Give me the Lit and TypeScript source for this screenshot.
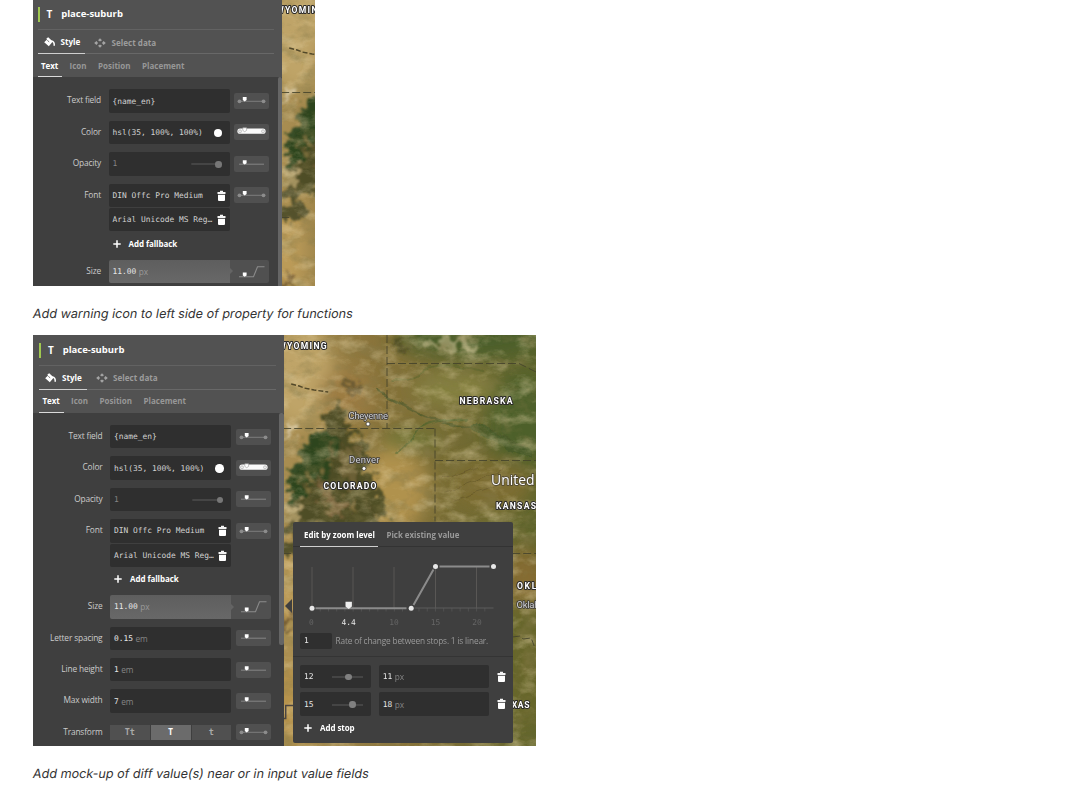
import { LitElement, html, svg, css, nothing } from "lit";
import { customElement, property } from "lit/decorators.js";

const trashIcon = html`<svg width="9" height="12" viewBox="0 0 9 12">
  <path d="M3 .8h3v1.300h2.500v1.900H.5V2.100H3z" fill="#f4f4f4" />
  <path d="M1 4.800h7v5.100q0 1-1 1H2q-1 0-1-1z" fill="#fff" />
</svg>`;

const plusIcon = html`<svg width="8" height="8" viewBox="0 0 8 8">
  <path d="M4 .3v7.400M.3 4h7.400" stroke="#fff" stroke-width="1.500" />
</svg>`;

const fnGlyphs: Record<string, unknown> = {
  zoom: svg`<path d="M5 8.200h25" stroke="#858585" />
    <path d="M8.800 4.300h3.800v2.900l-1.900 1.400l-1.900-1.400z" fill="#fff" />`,
  steps: svg`<path d="M6 8.300h24" stroke="#7c7c7c" />
    <circle cx="5.500" cy="8.300" r="1.900" fill="#8c8c8c" /><circle cx="29.500" cy="8.300" r="1.900" fill="#8c8c8c" />
    <path d="M8.800 4h3.800v2.900l-1.900 1.500l-1.900-1.500z" fill="#fff" />`,
  ramp: svg`<path d="M6 7.200h23" stroke="#fafafa" stroke-width="5.200" stroke-linecap="round" />
    <circle cx="6" cy="7.300" r="1.500" fill="#eee" stroke="#aaa" stroke-width=".6" />
    <circle cx="29" cy="7.300" r="1.500" fill="#eee" stroke="#aaa" stroke-width=".6" />
    <path d="M8.800 3.800h3.800v2.600l-1.900 1.300l-1.900-1.300z" fill="#fff" stroke="#999" stroke-width=".6" />`,
  curve: svg`<path d="M5 16.700h14.500l4-10h7" fill="none" stroke="#8a8a8a" stroke-width="1.100" />
    <path d="M8.800 12.500h3.800v2.900l-1.900 1.400l-1.900-1.400z" fill="#fff" />`,
};

@customElement("terrain-map")
export class TerrainMap extends LitElement {
  @property({ type: Boolean }) narrow = false;
  static styles = css`
    :host { display: block; flex: none; }
    svg { display: block; }
    .state { font: 700 8.600px "Roboto", sans-serif; fill: #fff; stroke: #2c2b2a; stroke-width: 2px; paint-order: stroke; stroke-linejoin: round; }
    .city { font: 400 9.500px "Roboto", sans-serif; fill: #d2d2d4; stroke: #3c3a38; stroke-width: 1.600px; paint-order: stroke; stroke-linejoin: round; }
    .country { font: 400 14.500px "Open Sans", sans-serif; fill: #fff; stroke: #4b4433; stroke-width: 1.600px; paint-order: stroke; }
    .border { fill: none; stroke: #44432c; stroke-width: 1; stroke-dasharray: 8 3; opacity: .85; }
  `;
  render() {
    return html`<svg width="253" height="411" viewBox="283.800 335 253 411">
      <defs>
        <linearGradient id="land" x1="0" y1=".1" x2="1" y2="0">
          <stop offset="0" stop-color="#a88d51" /><stop offset=".35" stop-color="#8a743b" />
          <stop offset=".65" stop-color="#746b33" /><stop offset="1" stop-color="#5a632a" />
        </linearGradient>
        <filter id="soft" x="-30%" y="-30%" width="160%" height="160%"><feGaussianBlur stdDeviation="9" /></filter>
        <filter id="rough" x="-20%" y="-20%" width="140%" height="140%">
          <feTurbulence type="fractalNoise" baseFrequency=".09" numOctaves="4" seed="8" result="n" />
          <feDisplacementMap in="SourceGraphic" in2="n" scale="36" xChannelSelector="R" yChannelSelector="G" />
          <feGaussianBlur stdDeviation="1" />
        </filter>
        <filter id="thin" x="-20%" y="-50%" width="140%" height="200%">
          <feTurbulence type="fractalNoise" baseFrequency=".06" numOctaves="2" seed="3" result="n" />
          <feDisplacementMap in="SourceGraphic" in2="n" scale="9" xChannelSelector="R" yChannelSelector="G" />
          <feGaussianBlur stdDeviation=".6" />
        </filter>
        <filter id="dark" x="0" y="0" width="100%" height="100%">
          <feTurbulence type="fractalNoise" baseFrequency=".05 .07" numOctaves="5" seed="21" />
          <feColorMatrix values="0 0 0 0 .24  0 0 0 0 .2  0 0 0 0 .07  2.200 0 0 0 -1" />
        </filter>
        <filter id="light" x="0" y="0" width="100%" height="100%">
          <feTurbulence type="fractalNoise" baseFrequency=".05 .08" numOctaves="5" seed="4" />
          <feColorMatrix values="0 0 0 0 .82  0 0 0 0 .7  0 0 0 0 .42  0 2 0 0 -.900" />
        </filter>
      </defs>
      <rect x="283" y="335" width="254" height="412" fill="url(#land)" />
      <g filter="url(#soft)">
        <ellipse cx="470" cy="337" rx="75" ry="22" fill="#4b5f29" />
        <ellipse cx="520" cy="420" rx="32" ry="46" fill="#4e6129" />
        <ellipse cx="455" cy="389" rx="42" ry="18" fill="#84803f" />
        <ellipse cx="410" cy="440" rx="30" ry="10" fill="#6c7436" />
        <ellipse cx="300" cy="375" rx="34" ry="52" fill="#bfa468" />
        <ellipse cx="345" cy="395" rx="26" ry="25" fill="#9c7c43" />
        <ellipse cx="390" cy="490" rx="38" ry="42" fill="#b0924d" />
        <ellipse cx="490" cy="485" rx="42" ry="26" fill="#7d6d30" />
        <ellipse cx="525" cy="580" rx="22" ry="34" fill="#856c31" />
        <ellipse cx="525" cy="665" rx="22" ry="65" fill="#67662c" />
        <ellipse cx="289" cy="590" rx="15" ry="55" fill="#bd9c58" />
        <ellipse cx="291" cy="705" rx="14" ry="45" fill="#b9944b" />
      </g>
      <g filter="url(#rough)">
        <path d="M312 438l12-12l9-20l12 2l1 19l9 9l14 5l-1 20l6 22l6 8l1 37l-21 5l-41-4l-30 0v-48l14-18z" fill="#40421f" opacity=".85" />
        <path d="M302 446l16-16l16 10l-5 34l-16 10l-24 20l0-32z" fill="#27431e" opacity=".85" />
        <path d="M340 450l7-7l7 10l3 28l-9 12l-5-18z" fill="#75653a" opacity=".8" />
        <path d="M318 488l8-2l18 30l-11 3z" fill="#876c45" opacity=".8" />
        <path d="M304 478l6-1l3 9l-8 4zM324 460l9 2l-2 9l-8-2zM350 500l6 1l1 14l-7-2z" fill="#8b7644" opacity=".8" />
        <path d="M287 500l9-5l4 22l-13 8z" fill="#cbb27a" opacity=".8" />
        <path d="M287 524h12l6 22l-6 12h-14z" fill="#434424" opacity=".85" />
        <path d="M342 378l10 4l11 9l-6 4l-12-8z" fill="#4d432a" opacity=".6" />
        <path d="M392 338h14l-3 15l-7-4z" fill="#45431e" opacity=".7" />
        <path d="M422 342l22-6l30 8l-10 6l-22-4l-17 5z" fill="#b5ae80" opacity=".7" />
        <path d="M287 612l11 14l-11 9z" fill="#594122" opacity=".7" />
        <path d="M287 422h9v13l-9 2z" fill="#d3c6a6" opacity=".8" />
      </g>
      <g fill="none" filter="url(#thin)" stroke-linecap="round">
        <path d="M376 391q31 17 58 28t43 5l45 23" stroke="#4a5729" stroke-width="2.500" opacity=".7" />
        <path d="M395 454q14-9 20-22q18-12 52-13" stroke="#49632b" stroke-width="2" opacity=".65" />
        <path d="M476 427q19 9 31 18l22 10" stroke="#3f5625" stroke-width="7" opacity=".6" />
        <path d="M392 380q28 0 32-11q22-8 60 2" stroke="#58632b" stroke-width="2" opacity=".55" />
        <path d="M442 480l35-14m-32 25l58-22m-48 31l62-20" stroke="#5f5225" stroke-width="1" opacity=".6" />
      </g>
      <rect x="283" y="335" width="254" height="412" filter="url(#dark)" opacity=".6" />
      <rect x="283" y="335" width="254" height="412" filter="url(#light)" opacity=".45" />
      <path class="border" d="M386.800 335v93.500M386.800 363.500h132l18 9M283 428.500h152M434.800 428.500v93M434.800 460.500h102M283 553.500h10M512 553.500h24M512 637l8-1l3 3l8-1l3 8" />
      <path d="M283.500 718.500h2v-13h8" fill="none" stroke="#4b4540" stroke-width="1.500" />
      <path d="M291 384l8 2l5 2l10 2l14 2" fill="none" stroke="#524829" stroke-width="1.400" stroke-dasharray="5 2" />
      <text class="state" x="278" y="348.500" textLength="48.500">WYOMING</text>
      ${this.narrow ? nothing : svg`
        <text class="state" x="459.300" y="403.500" textLength="53">NEBRASKA</text>
        <text class="state" x="323.300" y="488.500" textLength="53">COLORADO</text>
        <text class="state" x="495.800" y="509" textLength="40">KANSAS</text>
        <text class="state" x="516.800" y="588.500" textLength="59">OKLAHOMA</text>
        <text class="state" x="500.300" y="708" textLength="29">TEXAS</text>
        <text class="city" x="348.300" y="419" textLength="39.500">Cheyenne</text>
        <text class="city" x="348.800" y="463" textLength="30.500">Denver</text>
        <text class="city" x="516.300" y="608" textLength="58">Oklahoma City</text>
        <text class="country" x="490.800" y="485" textLength="43.500" lengthAdjust="spacingAndGlyphs">United</text>
        <circle cx="367.800" cy="424" r="2" fill="#fff" stroke="#403d38" stroke-width=".8" />
        <circle cx="363.800" cy="468.500" r="2" fill="#fff" stroke="#403d38" stroke-width=".8" />`}
    </svg>`;
  }
}

const shared = css`
  * { box-sizing: border-box; }
  svg { display: block; flex: none; }
  .field { display: flex; align-items: center; background: #2f2f2f; border-radius: 2px; height: 23.400px; padding: 1px 4px 0 4px; color: #d2d2d2; font: 7.900px/10px "DejaVu Sans Mono", monospace; white-space: pre; }
  .value { color: #e8e8e8; }
  .unit { font: 8.300px/10px "Open Sans", sans-serif; letter-spacing: -.1px; color: #858585; margin-left: 2.500px; }
  .push { margin-left: auto; }
  .add { display: flex; align-items: center; gap: 8px; color: #fff; font: 700 8px/10px "Open Sans", sans-serif; letter-spacing: -.08px; }
`;

@customElement("style-panel")
export class StylePanel extends LitElement {
  @property({ type: Boolean }) short = false;
  static styles = [shared, css`
    :host { display: block; flex: none; width: 250.500px; height: 411px; background: #3f3f3f; overflow: hidden; font: 8.400px/10px "Open Sans", sans-serif; color: #cbcbcb; }
    .head { background: #525252; height: 78px; padding: 0 8px 0 6px; }
    .title { display: flex; align-items: center; height: 30px; color: #fff; font-weight: 700; font-size: 9.500px; }
    .mark { width: 2px; height: 15px; background: #a0c850; margin-right: 7px; }
    .glyph { width: 14.700px; font-size: 10px; }
    .tabs { display: flex; border-top: 1px solid #626262; height: 24.500px; border-bottom: 1px solid #686868; font-weight: 700; color: #9c9c9c; font-size: 8.100px; }
    .tab { display: flex; align-items: center; gap: 6px; padding: 1px 3px 0 6px; height: 23.500px; white-space: nowrap; }
    .tab.on { color: #fff; border-bottom: 1.500px solid #cfcfcf; width: 47.500px; }
    .tab.data { padding-left: 9px; gap: 5.500px; }
    .subtabs { display: flex; height: 23.500px; font-weight: 700; font-size: 8px; color: #979797; }
    .sub { display: flex; align-items: center; padding: 0 4px; margin-right: 3.500px; }
    .sub.on { color: #fff; border-bottom: 1.500px solid #dadada; width: 24.500px; padding: 1px 0 0 3.500px; letter-spacing: -.1px; }
    .main { display: flex; height: 333px; }
    .rows { flex: 1; display: flex; flex-direction: column; gap: 8px; padding-top: 12px; }
    .row { display: flex; align-items: flex-start; height: 23.400px; flex: none; }
    .row.tall { height: 68px; }
    .label { width: 69.500px; text-align: right; line-height: 22.900px; font-size: 8.350px; margin-right: 7.500px; letter-spacing: -.16px; white-space: nowrap; }
    .stack { width: 121.300px; display: flex; flex-direction: column; gap: 1px; }
    .dim { color: #858585; }
    .fn { width: 35px; height: 16px; margin: 3.600px 0 0 4.600px; background: #505050; border-radius: 2px; }
    .lit { background: linear-gradient(#5e5e5e, #686868); color: #fff; border-radius: 2px 0 0 2px; }
    .lit .unit { color: #9a9a9a; }
    .wide { margin: 0; width: 39.600px; height: 23.400px; background: #505050; border-radius: 0 2px 2px 0; padding-left: 4.600px; position: relative; }
    .notch { position: absolute; left: 0; top: 8.500px; border-left: 3.500px solid #646464; border-top: 3.500px solid transparent; border-bottom: 3.500px solid transparent; }
    .dot { width: 8.500px; height: 8.500px; flex: none; border-radius: 50%; background: #fff; margin-right: 3.500px; }
    .slider { width: 31px; height: 2px; background: #454545; border-radius: 1px; display: flex; align-items: center; justify-content: flex-end; margin-right: 4px; }
    .knob { width: 6.500px; height: 6.500px; border-radius: 50%; background: #777; }
    .fallback { height: 20px; padding: 3px 4px 0; }
    .seg { display: flex; height: 15.600px; margin-top: 4px; gap: 1px; width: 121.300px; font: 700 8.500px/15px "DejaVu Sans Mono", monospace; color: #aaa; }
    .opt { flex: 1; background: #505050; text-align: center; }
    .opt.on { background: #6b6b6b; color: #fff; }
    .track { width: 4.500px; height: 232px; background: #656565; border-radius: 2px; }
  `];

  private row(label: string, body: unknown, fn: string, tall = false) {
    return html`<div class="row ${tall ? "tall" : ""}"><div class="label">${label}</div>${body}
      ${fn === "curve"
        ? html`<div class="fn wide"><div class="notch"></div><svg width="35" height="23" viewBox="0 0 35 23">${fnGlyphs.curve}</svg></div>`
        : html`<div class="fn"><svg width="35" height="16" viewBox="0 0 35 16">${fnGlyphs[fn]}</svg></div>`}
    </div>`;
  }

  private num(v: string, unit: string, cls = "") {
    return html`<div class="stack"><div class="field ${cls}"><span class="value">${v}</span><span class="unit">${unit}</span></div></div>`;
  }

  render() {
    return html`
      <div class="head">
        <div class="title"><div class="mark"></div><div class="glyph">T</div>place-suburb</div>
        <div class="tabs">
          <div class="tab on">
            <svg width="11" height="10" viewBox="0 0 11 10"><path d="M4.200.300l4.600 4.300l-4 4.600l-4.600-3.900l2.800-2.800l-.6-1z" fill="#fff" /><path d="M3.300 3.300l1.900 1.600" stroke="#525252" stroke-width=".8" /><path d="M7.300 4.100q3.300.2 2.900 4.700" fill="none" stroke="#fff" stroke-width="1.500" /></svg>
            Style
          </div>
          <div class="tab data">
            <svg width="12" height="10" viewBox="0 0 12 10" fill="#a4a4a4"><path d="M4 2.300l2-2l2 2l-2 1.200zM4 7.700l2 2l2-2l-2-1.200zM2.500 3l-2.300 2l2.300 2l1.500-2zM9.500 3l2.300 2l-2.300 2l-1.500-2z" /></svg>
            Select data
          </div>
        </div>
        <div class="subtabs">
          <div class="sub on">Text</div><div class="sub">Icon</div><div class="sub">Position</div><div class="sub">Placement</div>
        </div>
      </div>
      <div class="main">
        <div class="rows">
          ${this.row("Text field", html`<div class="stack"><div class="field">{name_en}</div></div>`, "steps")}
          ${this.row("Color", html`<div class="stack"><div class="field">hsl(35, 100%, 100%)<span class="dot push"></span></div></div>`, "ramp")}
          ${this.row("Opacity", html`<div class="stack"><div class="field dim">1<span class="slider push"><span class="knob"></span></span></div></div>`, "zoom")}
          ${this.row("Font", html`<div class="stack">
            <div class="field">DIN Offc Pro Medium<span class="push">${trashIcon}</span></div>
            <div class="field">Arial Unicode MS Reg…<span class="push">${trashIcon}</span></div>
            <div class="add fallback">${plusIcon}Add fallback</div></div>`, "steps", true)}
          ${this.row("Size", this.num("11.00", "px", "lit"), "curve")}
          ${this.short ? nothing : html`
            ${this.row("Letter spacing", this.num("0.15", "em"), "zoom")}
            ${this.row("Line height", this.num("1", "em"), "zoom")}
            ${this.row("Max width", this.num("7", "em"), "zoom")}
            ${this.row("Transform", html`<div class="seg"><div class="opt">Tt</div><div class="opt on">T</div><div class="opt">t</div></div>`, "steps")}`}
        </div>
        <div class="track"></div>
      </div>`;
  }
}

@customElement("zoom-card")
export class ZoomCard extends LitElement {
  static styles = [shared, css`
    :host { display: block; width: 220.500px; height: 221px; background: #3f3f3f; border-radius: 2px; font: 8px/10px "Open Sans", sans-serif; color: #9a9a9a; }
    .tabs { display: flex; height: 25px; padding-left: 7.500px; border-bottom: 1px solid #333; font-weight: 700; font-size: 7.900px; white-space: nowrap; }
    .tab { padding: 7.500px 4px 0; height: 25px; margin-right: 4.500px; }
    .tab.on { color: #fff; border-bottom: 1.500px solid #cfcfcf; width: 78px; }
    .rate { display: flex; align-items: center; gap: 4px; padding: 0 7.500px 7.500px; border-bottom: 1px solid #343434; white-space: nowrap; font-size: 8.300px; letter-spacing: -.17px; }
    .rate .field { width: 31.500px; height: 16px; }
    .stops { display: flex; flex-direction: column; gap: 4px; padding: 8px 7.500px; }
    .stop { display: flex; align-items: center; }
    .zoom { width: 71px; margin-right: 8px; }
    .out { width: 110.500px; margin-right: 7.500px; }
    .slider { width: 31px; height: 2px; background: #454545; margin: 0 4px 0 auto; display: flex; align-items: center; }
    .knob { width: 6.500px; height: 6.500px; border-radius: 50%; background: #808080; }
    .add { padding: 0 11.500px; margin-top: -.600px; }
    text { font: 7.900px "DejaVu Sans Mono", monospace; fill: #666; text-anchor: middle; }
    .now { fill: #e6e6e6; }
  `];
  private stop(z: string, at: number, v: string) {
    return html`<div class="stop">
      <div class="field zoom"><span class="value">${z}</span><span class="slider"><span class="knob" style="margin-left:${at}px"></span></span></div>
      <div class="field out"><span class="value">${v}</span><span class="unit">px</span></div>${trashIcon}</div>`;
  }
  render() {
    const ticks = Array.from({ length: 22 }, (_, i) => 19.5 + i * 8.23);
    return html`
      <div class="tabs"><div class="tab on">Edit by zoom level</div><div class="tab">Pick existing value</div></div>
      <svg width="220.500" height="85.500" viewBox="0.500 25 220.500 85.500">
        ${[19.5, 60.5, 101.5, 143, 184].map((x) => svg`<path d="M${x} 45v41" stroke="#595755" />`)}
        ${ticks.map((x) => svg`<path d="M${x} 86v3.500" stroke="#555" stroke-width=".8" />`)}
        <path d="M122 86h79" stroke="#5c5c5c" />
        <path d="M23 86.200h91M121 83l20-35.500M147 44.500h50" stroke="#8b8b8b" stroke-width="2" />
        <g fill="#e8e8e8"><circle cx="19.500" cy="86.200" r="2.500" /><circle cx="118.700" cy="86.200" r="2.500" /><circle cx="143" cy="44.500" r="2.500" /><circle cx="201" cy="44.500" r="2.500" /></g>
        <path d="M53 79.800h6.400v4.600l-3.200 2.500l-3.200-2.500z" fill="#eee" />
        <text x="19" y="103">0</text><text class="now" x="56.200" y="103">4.4</text><text x="101.500" y="103">10</text><text x="143" y="103">15</text><text x="184.500" y="103">20</text>
      </svg>
      <div class="rate"><div class="field"><span class="value">1</span></div>Rate of change between stops. 1 is linear.</div>
      <div class="stops">${this.stop("12", 13.5, "11")}${this.stop("15", 17.5, "18")}</div>
      <div class="add">${plusIcon}Add stop</div>`;
  }
}

@customElement("editor-shot")
export class EditorShot extends LitElement {
  @property({ type: Boolean }) card = false;
  static styles = css`
    :host { display: block; }
    .shot { display: flex; position: relative; width: 503.500px; }
    .pop { position: absolute; left: 259.500px; top: 187px; }
    .arrow { position: absolute; left: 252px; top: 264px; border-right: 7.500px solid #3f3f3f; border-top: 7px solid transparent; border-bottom: 7px solid transparent; }
  `;
  render() {
    return html`<div class="shot"><style-panel ?short=${!this.card}></style-panel><terrain-map ?narrow=${!this.card}></terrain-map>
      ${this.card ? html`<zoom-card class="pop"></zoom-card><div class="arrow"></div>` : nothing}</div>`;
  }
}

@customElement("app-root")
export class AppRoot extends LitElement {
  static styles = css`
    :host { display: block; height: 800px; overflow: hidden; background: #fff; }
    .page { padding-left: 33px; }
    .crop { width: 282px; height: 286px; overflow: hidden; }
    .inner { margin: -.600px 0 0 -1.500px; }
    .full { width: 503px; height: 411px; overflow: hidden; }
    .cap { font: 400 12.600px/20px "Inter", sans-serif; color: #333; height: 49px; padding: 17.500px 0 0; box-sizing: border-box; }
    .slant { display: inline-block; transform: skewX(-10deg); white-space: nowrap; }
  `;
  render() {
    return html`<div class="page">
      <div class="crop"><editor-shot class="inner"></editor-shot></div>
      <div class="cap"><span class="slant">Add warning icon to left side of property for functions</span></div>
      <div class="full"><editor-shot card></editor-shot></div>
      <div class="cap"><span class="slant">Add mock-up of diff value(s) near or in input value fields</span></div>
    </div>`;
  }
}
